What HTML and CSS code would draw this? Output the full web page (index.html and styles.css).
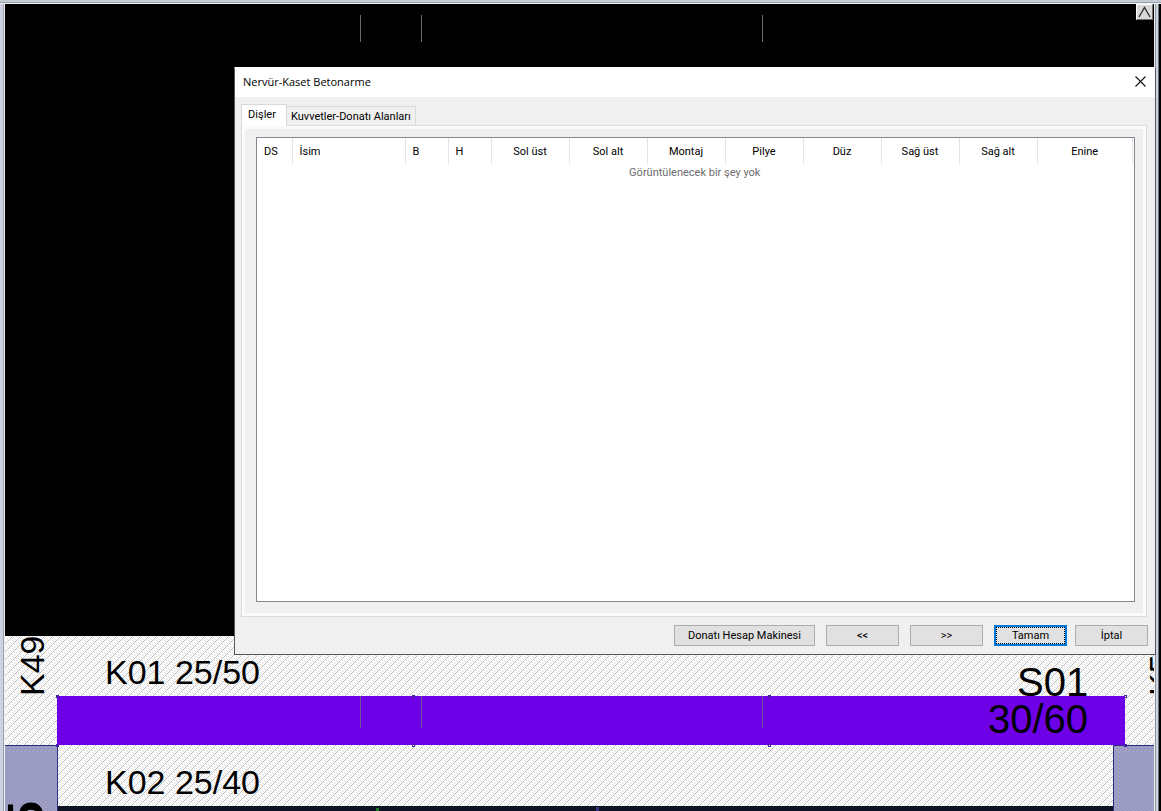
FILE: index.html
```
<!DOCTYPE html>
<html lang="tr">
<head>
    <meta charset="UTF-8">
    <title>Nervür-Kaset Betonarme</title>
    <link rel="stylesheet" href="styles.css">
</head>
<body>
<div class="frame">
    <div class="viewport">
        <svg class="plan" aria-label="Kalıp planı">
            <defs>
                <pattern id="hatch" width="8" height="8" patternUnits="userSpaceOnUse">
                    <rect width="8" height="8" fill="#ffffff"/>
                    <path d="M0 7h1v1h-1zM1 6h1v1h-1zM2 5h1v1h-1zM3 4h1v1h-1zM4 3h1v1h-1zM5 2h1v1h-1zM6 1h1v1h-1zM7 0h1v1h-1z" fill="#c0c0c0"/>
                    <path d="M1 2h1v1h-1zM3 0h1v1h-1zM5 6h1v1h-1zM7 4h1v1h-1zM0 5h1v1h-1zM2 3h1v1h-1zM4 1h1v1h-1zM6 7h1v1h-1zM1 0h1v1h-1zM3 6h1v1h-1zM5 4h1v1h-1zM7 2h1v1h-1z" fill="#e0e0e0"/>
                </pattern>
                <pattern id="column" width="4" height="4" patternUnits="userSpaceOnUse">
                    <rect width="4" height="4" fill="#9f9fc6"/>
                    <path d="M0 0h1v1h-1zM2 2h1v1h-1z" fill="#8c8cb4"/>
                </pattern>
            </defs>

            <!-- beams -->
            <rect y="632" width="100%" height="180" fill="url(#hatch)"/>
            <rect x="53" y="802" width="1056" height="10" fill="#0e1424"/>
            <rect x="371" y="804" width="3" height="8" fill="#1d7a2a"/>
            <rect x="591" y="803" width="3" height="8" fill="#34307e"/>

            <!-- columns -->
            <rect class="column" x="-1" y="741" width="53" height="80"/>
            <rect class="column" x="1108" y="741" width="60" height="80"/>

            <!-- selected beam -->
            <rect x="52" y="692" width="1068" height="49" fill="#6e00e8"/>
            <g fill="#4a1fa8">
                <rect x="51" y="691" width="3" height="3"/>
                <rect x="51" y="740" width="3" height="3"/>
                <rect x="407" y="691" width="3" height="3"/>
                <rect x="407" y="740" width="3" height="3"/>
                <rect x="763" y="691" width="3" height="3"/>
                <rect x="763" y="740" width="3" height="3"/>
                <rect x="1119" y="691" width="3" height="3"/>
                <rect x="1119" y="740" width="3" height="3"/>
            </g>
            <g fill="#ffffff">
                <rect x="408" y="741" width="1" height="1"/>
                <rect x="764" y="741" width="1" height="1"/>
                <rect x="1120" y="692" width="1" height="1"/>
            </g>

            <!-- axis marks -->
            <path class="axis" d="M355 11v27M416 11v27M757 11v27"/>
            <path class="axis axis-beam" d="M355 692v32M416 692v32M757 692v32"/>

            <text class="beam-name" x="100" y="680">K01 25/50</text>
            <text class="beam-name" x="100" y="790">K02 25/40</text>
            <text class="beam-name" transform="translate(39 692) rotate(-90)">K49</text>
            <text class="beam-name" transform="translate(1168 692) rotate(-90)">K50</text>
            <text class="column-name" x="1012" y="692">S01</text>
            <text class="column-name" x="983" y="729">30/60</text>
            <text class="corner-name" transform="translate(38 825) rotate(-90)">5</text>
        </svg>

        <button class="scroll-up" aria-label="Yukarı">
            <svg width="13" height="12" viewBox="0 0 13 12"><path d="M1 11L6.500 1.500L12 11" fill="none" stroke="#222" stroke-width="1.200"/></svg>
        </button>

        <div class="dialog" role="dialog" aria-labelledby="dialog-title">
            <div class="title-bar">
                <span id="dialog-title">Nervür-Kaset Betonarme</span>
                <button class="close-btn" aria-label="Kapat">
                    <svg width="11" height="11" viewBox="0 0 11 11"><path d="M.5 .5L10.500 10.500M10.500 .5L.5 10.500" stroke="#111" stroke-width="1.100"/></svg>
                </button>
            </div>
            <div class="tabs" role="tablist">
                <button class="tab active" role="tab" aria-selected="true">Dişler</button>
                <button class="tab" role="tab" aria-selected="false">Kuvvetler-Donatı Alanları</button>
            </div>
            <div class="tab-page">
                <div class="list">
                    <table>
                        <colgroup>
                            <col class="col-ds"><col class="col-name"><col class="col-b"><col class="col-h">
                            <col class="col-bar"><col class="col-bar"><col class="col-bar"><col class="col-bar">
                            <col class="col-bar"><col class="col-bar"><col class="col-bar"><col>
                        </colgroup>
                        <thead>
                            <tr>
                                <th class="left">DS</th>
                                <th class="left">İsim</th>
                                <th class="left">B</th>
                                <th class="left">H</th>
                                <th>Sol üst</th>
                                <th>Sol alt</th>
                                <th>Montaj</th>
                                <th>Pilye</th>
                                <th>Düz</th>
                                <th>Sağ üst</th>
                                <th>Sağ alt</th>
                                <th>Enine</th>
                            </tr>
                        </thead>
                        <tbody>
                            <tr><td colspan="12">Görüntülenecek bir şey yok</td></tr>
                        </tbody>
                    </table>
                </div>
            </div>
            <div class="buttons">
                <button class="btn wide">Donatı Hesap Makinesi</button>
                <button class="btn">&lt;&lt;</button>
                <button class="btn">&gt;&gt;</button>
                <div class="confirm">
                    <button class="btn default">Tamam</button>
                    <button class="btn">İptal</button>
                </div>
            </div>
        </div>
    </div>
    <div class="edge"></div>
</div>
</body>
</html>
```
FILE: styles.css
```
* {
    box-sizing: border-box;
}
body {
    margin: 0;
    height: 100vh;
    overflow: hidden;
    background-color: #000000;
    font-family: Roboto, "Liberation Sans", sans-serif;
    font-size: 11px;
    color: #000000;
}
button {
    font: inherit;
    color: inherit;
    padding: 0;
}
.frame {
    display: flex;
    height: 100%;
    padding: 4px 0 0 5px;
    background: linear-gradient(#c4ccd8 0 2px, #9aa2ac 2px 3px, #f0f0f0 3px 4px, transparent 4px),
                linear-gradient(90deg, #ccd2e2 0 3px, #9aa0ac 3px 4px, #f0f0f0 4px 5px, transparent 5px);
}
.viewport {
    position: relative; /* the dialog floats over the plan */
    flex: 1;
    background-color: #000000;
}
.plan {
    display: block;
    width: 100%;
    height: 100%;
    font-family: "Liberation Sans", Arial, sans-serif;
}
.edge {
    width: 7px;
    background: linear-gradient(90deg, #f0f0f0 0 1px, #8d949e 1px 2px, #ccd4e2 2px 4px, #6a7280 4px 5px, #000000 5px);
}

/* plan drawing */
.axis {
    stroke: #6a6a6a;
    stroke-width: 1px;
    shape-rendering: crispEdges;
}
.axis-beam {
    stroke: #70589a;
}
.column {
    fill: url(#column);
    stroke: #2a2a80;
    shape-rendering: crispEdges;
}
.beam-name {
    font-size: 34px;
}
.column-name {
    font-size: 40px;
}
.corner-name {
    font-size: 50px;
    font-weight: bold;
}
.scroll-up {
    position: absolute;
    top: 0;
    right: 1px;
    width: 17px;
    height: 16px;
    display: flex;
    align-items: center;
    justify-content: center;
    background-color: #d8d8d8;
    border: 1px solid #ffffff;
    border-right-color: #707070;
    border-bottom-color: #707070;
}

/* dialog window */
.dialog {
    position: absolute;
    top: 63px;
    right: -2px;
    width: 922px;
    height: 588px;
    display: flex;
    flex-direction: column;
    background-color: #f0f0f0;
    border: 1px solid #555555;
    border-top-color: #ffffff;
}
.title-bar {
    display: flex;
    align-items: center;
    justify-content: space-between;
    height: 29px;
    padding: 0 9px 2px 8px;
    background-color: #ffffff;
    font-family: "Open Sans", sans-serif;
    font-size: 11px;
}
.close-btn {
    display: flex;
    border: none;
    background: none;
}
.tabs {
    display: flex;
    align-items: flex-end;
    height: 28px;
    padding: 0 6px;
}
.tab {
    height: 19px;
    padding: 0 4px;
    border: 1px solid #d9d9d9;
    border-bottom: none;
    background-color: #f0f0f0;
}
.tab.active {
    height: 22px;
    width: 46px;
    margin-right: -1px;
    margin-bottom: -1px;
    padding: 0 4px 3px 0;
    z-index: 1;
    background-color: #ffffff;
}
.tab-page {
    flex: 1;
    display: flex;
    margin: 0 8px 0 6px;
    padding: 11px 11px 14px 14px;
    border: 1px solid #dcdcdc;
    box-shadow: inset 0 0 0 3px #fbfbfb;
}
.list {
    flex: 1;
    padding-right: 1px;
    background-color: #ffffff;
    border: 1px solid #828790;
}
table {
    width: 100%;
    table-layout: fixed;
    border-collapse: collapse;
}
th {
    height: 26px;
    padding: 0;
    font-weight: normal;
    border-right: 1px solid #e5e5e5;
}
th.left {
    padding-left: 7px;
    text-align: left;
}
td {
    height: 17px;
    padding: 0;
    text-align: center;
    color: #6d6d6d;
}
.col-ds {
    width: 35px;
}
.col-name {
    width: 113px;
}
.col-b,
.col-h {
    width: 43px;
}
.col-bar {
    width: 78px;
}
.buttons {
    display: flex;
    justify-content: flex-end;
    gap: 11px;
    padding: 8px 7px;
}
.confirm {
    display: flex;
    gap: 8px;
}
.btn {
    width: 73px;
    height: 21px;
    background-color: #e1e1e1;
    border: 1px solid #adadad;
}
.btn.wide {
    width: 141px;
}
.btn.default {
    border: 2px solid #0078d7;
    outline: 1px dotted #000000;
    outline-offset: -3px;
}
```
